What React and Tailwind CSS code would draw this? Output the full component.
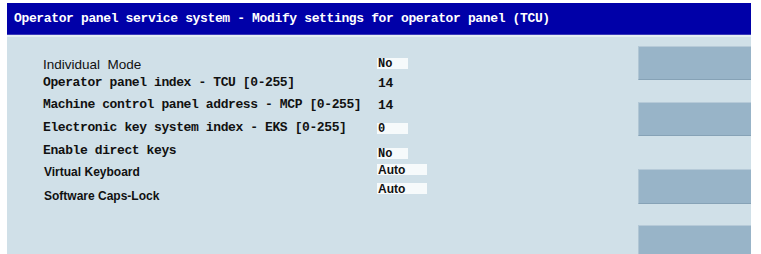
import React from "react";

const mono = { fontFamily: '"Liberation Mono", "DejaVu Sans Mono", monospace' };
const sans = { fontFamily: '"Liberation Sans", Arial, sans-serif' };

// mt: gap above the row, lmt / vmt: offset of label and value inside the row
const rows = [
  { label: "Individual  Mode", font: "sans", value: "No", box: "w-[31px]", mt: "mt-0", lmt: "mt-0", vmt: "mt-[2px]" },
  { label: "Operator panel index - TCU [0-255]", font: "mono", value: "14", mt: "mt-0", lmt: "mt-0", vmt: "mt-[3px]" },
  { label: "Machine control panel address - MCP [0-255]", font: "mono", value: "14", mt: "mt-[4px]", lmt: "mt-0", vmt: "mt-[3px]" },
  { label: "Electronic key system index - EKS [0-255]", font: "mono", value: "0", box: "w-[31px]", mt: "mt-[5px]", lmt: "mt-0", vmt: "mt-[4px]" },
  { label: "Enable direct keys", font: "mono", value: "No", box: "w-[31px]", mt: "mt-[5px]", lmt: "mt-0", vmt: "mt-[6px]" },
  { label: "Virtual Keyboard", font: "sans", value: "Auto", box: "w-[50px]", mt: "mt-[3px]", lmt: "mt-0", vmt: "mt-[1px]" },
  { label: "Software Caps-Lock", font: "sans", value: "Auto", box: "w-[50px]", mt: "mt-[2px]", lmt: "mt-[4px]", vmt: "mt-0" },
];

const Row = ({ r }) => (
  <div className={`flex h-[18px] shrink-0 items-start ${r.mt}`}>
    <div className={`w-[334px] shrink-0 pl-[36px] h-[18px] flex items-center ${r.lmt}`}>
      {r.font === "mono" ? (
        <span className="text-[13px] font-bold leading-[18px] text-[#111] whitespace-pre tracking-[-0.4px]" style={mono}>
          {r.label}
        </span>
      ) : r.label.startsWith("Individual") ? (
        <span className="text-[13.5px] font-normal leading-[18px] text-[#111] whitespace-pre" style={sans}>
          {r.label}
        </span>
      ) : (
        <span className="pl-[1px] text-[12px] font-semibold leading-[18px] text-[#111] whitespace-pre" style={sans}>
          {r.label}
        </span>
      )}
    </div>
    <div className={`ml-[36px] ${r.vmt}`}>
      {r.box ? (
        <div className={`${r.box} h-[11px] bg-[#f6fafb] pl-[1px] flex items-center`}>
          <span
            className="text-[12px] font-bold leading-none text-[#111]"
            style={r.value === "Auto" ? sans : mono}
          >
            {r.value}
          </span>
        </div>
      ) : (
        <div className="h-[12px] pl-[1px] flex items-center">
          <span className="text-[13px] font-bold leading-none text-[#111] tracking-[-0.36px]" style={mono}>
            {r.value}
          </span>
        </div>
      )}
    </div>
  </div>
);

const SoftKey = ({ h = "h-[34px]", mt = "" }) => (
  <div
    className={`${h} ${mt} w-full shrink-0 bg-[#98b4c8] border-t border-t-[#b6cad8] border-l border-l-[#b0c6d4] border-b border-b-[#86a2b6]`}
  />
);

export default function App() {
  return (
    <div className="w-[761px] h-[254px] bg-white pl-[7px] pr-[10px] pt-[3px] overflow-hidden">
      <div className="flex h-full flex-col">
        <div className="h-[32px] shrink-0 bg-[#0000a8] border-b border-b-[#3a3ab8] flex items-center pl-[7px] pt-[1px]">
          <span className="text-[13px] font-bold text-white whitespace-pre tracking-[-0.36px]" style={mono}>
            Operator panel service system - Modify settings for operator panel (TCU)
          </span>
        </div>
        <div className="h-[2px] shrink-0 bg-[#e4eef2]" />
        <div className="flex flex-1 min-h-0 bg-[#d0e0e8]">
          <div className="flex-1 pt-[19px] flex flex-col">
            {rows.map((r, i) => (
              <Row key={i} r={r} />
            ))}
          </div>
          <div className="w-[113px] shrink-0 pt-[9px] flex flex-col">
            <SoftKey />
            <SoftKey mt="mt-[22px]" />
            <SoftKey mt="mt-[33px]" h="h-[35px]" />
            <SoftKey mt="mt-[21px]" h="h-[40px]" />
          </div>
        </div>
      </div>
    </div>
  );
}
